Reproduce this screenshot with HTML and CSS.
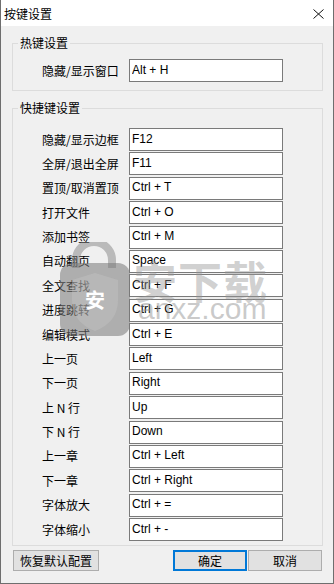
FILE: index.html
```html
<!DOCTYPE html>
<html lang="zh-CN">
<head>
  <meta charset="UTF-8" />
  <meta name="viewport" content="width=device-width, initial-scale=1.0"/>
  <title>按键设置</title>
  <link rel="stylesheet" href="styles.css">
</head>
<body>

  <div class="window">
    <div class="titlebar">
      <span class="title">按键设置</span>
      <svg class="close" width="11" height="10" viewBox="0 0 11 10">
        <path d="M0.5 0.5 L10.5 9.5 M10.5 0.5 L0.5 9.5" stroke="#111" stroke-width="1" fill="none"/>
      </svg>
    </div>

    <div class="content">
      <!-- Hotkey group -->
      <fieldset class="group">
        <legend>热键设置</legend>
        <div class="rows rows-hotkey">
          <div class="row"><label>隐藏/显示窗口</label><input class="key" type="text" value="Alt + H" readonly></div>
        </div>
      </fieldset>

      <!-- Shortcut group -->
      <fieldset class="group group-shortcut">
        <legend>快捷键设置</legend>
        <div class="rows rows-shortcut">
          <div class="row"><label>隐藏/显示边框</label><input class="key" type="text" value="F12" readonly></div>
          <div class="row"><label>全屏/退出全屏</label><input class="key" type="text" value="F11" readonly></div>
          <div class="row"><label>置顶/取消置顶</label><input class="key" type="text" value="Ctrl + T" readonly></div>
          <div class="row"><label>打开文件</label><input class="key" type="text" value="Ctrl + O" readonly></div>
          <div class="row"><label>添加书签</label><input class="key" type="text" value="Ctrl + M" readonly></div>
          <div class="row"><label>自动翻页</label><input class="key" type="text" value="Space" readonly></div>
          <div class="row"><label>全文查找</label><input class="key" type="text" value="Ctrl + F" readonly></div>
          <div class="row"><label>进度跳转</label><input class="key" type="text" value="Ctrl + G" readonly></div>
          <div class="row"><label>编辑模式</label><input class="key" type="text" value="Ctrl + E" readonly></div>
          <div class="row"><label>上一页</label><input class="key" type="text" value="Left" readonly></div>
          <div class="row"><label>下一页</label><input class="key" type="text" value="Right" readonly></div>
          <div class="row"><label>上 N 行</label><input class="key" type="text" value="Up" readonly></div>
          <div class="row"><label>下 N 行</label><input class="key" type="text" value="Down" readonly></div>
          <div class="row"><label>上一章</label><input class="key" type="text" value="Ctrl + Left" readonly></div>
          <div class="row"><label>下一章</label><input class="key" type="text" value="Ctrl + Right" readonly></div>
          <div class="row"><label>字体放大</label><input class="key" type="text" value="Ctrl + =" readonly></div>
          <div class="row"><label>字体缩小</label><input class="key" type="text" value="Ctrl + -" readonly></div>
        </div>
      </fieldset>

      <div class="actions">
        <button class="btn btn-reset">恢复默认配置</button>
        <span class="spacer"></span>
        <button class="btn btn-primary">确定</button>
        <button class="btn">取消</button>
      </div>
    </div>

    <!-- site watermark on top of the dialog -->
    <div class="watermark">
      <svg class="wm-logo" width="80" height="100" viewBox="0 0 80 100">
        <path d="M20 26 V18 A18 18 0 0 1 56 18 V26" stroke="rgba(120,120,120,0.45)" stroke-width="8" fill="none"/>
        <rect x="4" y="21" width="70" height="73" rx="12" fill="rgba(120,120,120,0.55)"/>
        <path d="M16 38 L39 31 L62 38 V58 Q62 80 39 89 Q16 80 16 58 Z" fill="rgba(200,200,200,0.35)"/>
        <text x="39" y="66" font-size="20" font-family="Noto Sans CJK SC" font-weight="bold" fill="#fff" text-anchor="middle">安</text>
      </svg>
      <span class="wm-name">安下载</span>
      <span class="wm-site">anxz.com</span>
    </div>
  </div>

</body>
</html>
```

FILE: styles.css
```css
/* Base Reset */
* {
  margin: 0;
  padding: 0;
  box-sizing: border-box;
}

body {
  background: #f0f0f0;
  font-family: "Noto Sans CJK SC", sans-serif;
  font-size: 12px;
  color: #000;
}

/* Dialog frame */
.window {
  position: relative;
  width: 334px;
  height: 584px;
  background: #f0f0f0;
  border: 1px solid #6e6e6e;
  border-top: none;
  overflow: hidden;
}

.titlebar {
  height: 26px;
  background: #fff;
  display: flex;
  align-items: center;
  justify-content: space-between;
  padding: 1px 9px 0 3px;
}

.title {
  font-size: 12px;
  line-height: 14px;
}

.close {
  display: block;
  margin-top: 1px;
}

.content {
  padding: 10px 10px 0 11px;
}

/* Group boxes */
.group {
  border: 1px solid #dcdcdc;
  padding: 0;
  margin: 0;
}

.group legend {
  margin-left: 5px;
  padding: 0 2px;
  font-size: 12px;
  line-height: 14px;
}

.group-shortcut {
  margin-top: 10px;
}

.rows {
  display: flex;
  flex-direction: column;
  padding-left: 29px;
}

.rows-hotkey {
  padding-top: 9px;
  padding-bottom: 8px;
}

.rows-shortcut {
  padding-top: 13px;
  padding-bottom: 4px;
  gap: 1.375px;
}

.row {
  display: flex;
  align-items: center;
  height: 23px;
}

.row label {
  width: 87px;
  font-size: 12px;
  line-height: 14px;
  white-space: nowrap;
}

.key {
  width: 154px;
  height: 23px;
  border: 1px solid #7a7a7a;
  background: #fff;
  padding: 0 2px 2px;
  font-family: "Liberation Sans", "Noto Sans CJK SC", sans-serif;
  font-size: 12px;
  color: #000;
  outline: none;
}

/* Buttons */
.actions {
  display: flex;
  align-items: center;
  gap: 1px;
  margin: 4px 1px 0 1px;
}

.spacer {
  flex: 1;
}

.btn {
  height: 21px;
  width: 74px;
  background: #e1e1e1;
  border: 1px solid #adadad;
  font-family: "Noto Sans CJK SC", sans-serif;
  font-size: 12px;
  line-height: 14px;
  color: #000;
}

.btn-reset {
  width: 86px;
}

.btn-primary {
  border: 2px solid #0078d7;
}

/* Watermark */
.watermark {
  position: absolute;
  left: 55px;
  top: 242px;
  width: 230px;
  height: 100px;
  pointer-events: none;
}

.wm-logo {
  position: absolute;
  left: 0;
  top: 0;
}

.wm-name {
  position: absolute;
  left: 77px;
  top: 14px;
  font-size: 44px;
  line-height: 48px;
  font-weight: bold;
  color: rgba(150, 150, 150, 0.45);
  letter-spacing: 1px;
  white-space: nowrap;
}

.wm-site {
  position: absolute;
  left: 82px;
  top: 51px;
  font-family: "Liberation Sans", sans-serif;
  font-size: 30px;
  line-height: 32px;
  color: rgba(150, 150, 150, 0.5);
  white-space: nowrap;
}
```
